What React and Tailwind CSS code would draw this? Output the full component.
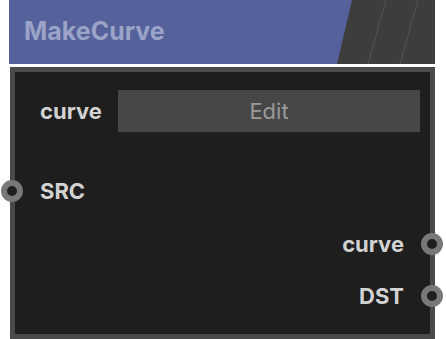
import React from 'react';

function Port({ side }) {
  return (
    <div
      className={
        'absolute top-1/2 -translate-y-1/2 w-[22px] h-[22px] rounded-full border-[6px] border-[#787878] bg-[#1e1e1e] ' +
        (side === 'left' ? 'left-[-14px]' : 'right-[-13px]')
      }
    />
  );
}

export default function App() {
  return (
    <div className="w-[446px] h-[339px] bg-white overflow-hidden" style={{ fontFamily: 'Inter, "Open Sans", sans-serif' }}>
      {/* header */}
      <div className="relative ml-[9px] w-[426px] h-[64px] bg-[#55619a] flex items-center pl-[15px]">
        <span className="relative text-[25px] font-bold text-[#9ba4c8]">MakeCurve</span>
        <svg className="absolute right-0 top-0" width="98" height="64" viewBox="0 0 98 64">
          <polygon points="15,0 98,0 98,64 0,64" fill="#3d3d3d" />
          <line x1="49" y1="0" x2="31" y2="64" stroke="#4f4f4f" strokeWidth="1.2" />
          <line x1="81" y1="0" x2="63" y2="64" stroke="#4f4f4f" strokeWidth="1.2" />
        </svg>
      </div>

      {/* body */}
      <div className="mt-[3px] ml-[10px] w-[425px] h-[272px] border-[5px] border-[#4a4a4a] bg-[#1e1e1e] flex flex-col">
        <div className="relative mt-[18px] h-[42px] flex items-center pl-[25px] pr-[10px]">
          <span className="w-[78px] text-[22px] font-bold text-[#d2d2d2]">curve</span>
          <div className="flex-1 h-full bg-[#474747] flex items-center justify-center text-[22px] text-[#9a9a9a]">
            Edit
          </div>
        </div>

        <div className="relative mt-[39px] h-[40px] flex items-center pl-[25px]">
          <Port side="left" />
          <span className="text-[22px] font-bold text-[#d2d2d2]">SRC</span>
        </div>

        <div className="relative mt-[13px] h-[40px] flex items-center justify-end pr-[26px]">
          <span className="text-[22px] font-bold text-[#d2d2d2]">curve</span>
          <Port side="right" />
        </div>

        <div className="relative mt-[12px] h-[40px] flex items-center justify-end pr-[26px]">
          <span className="text-[22px] font-bold text-[#d2d2d2]">DST</span>
          <Port side="right" />
        </div>
      </div>
    </div>
  );
}
